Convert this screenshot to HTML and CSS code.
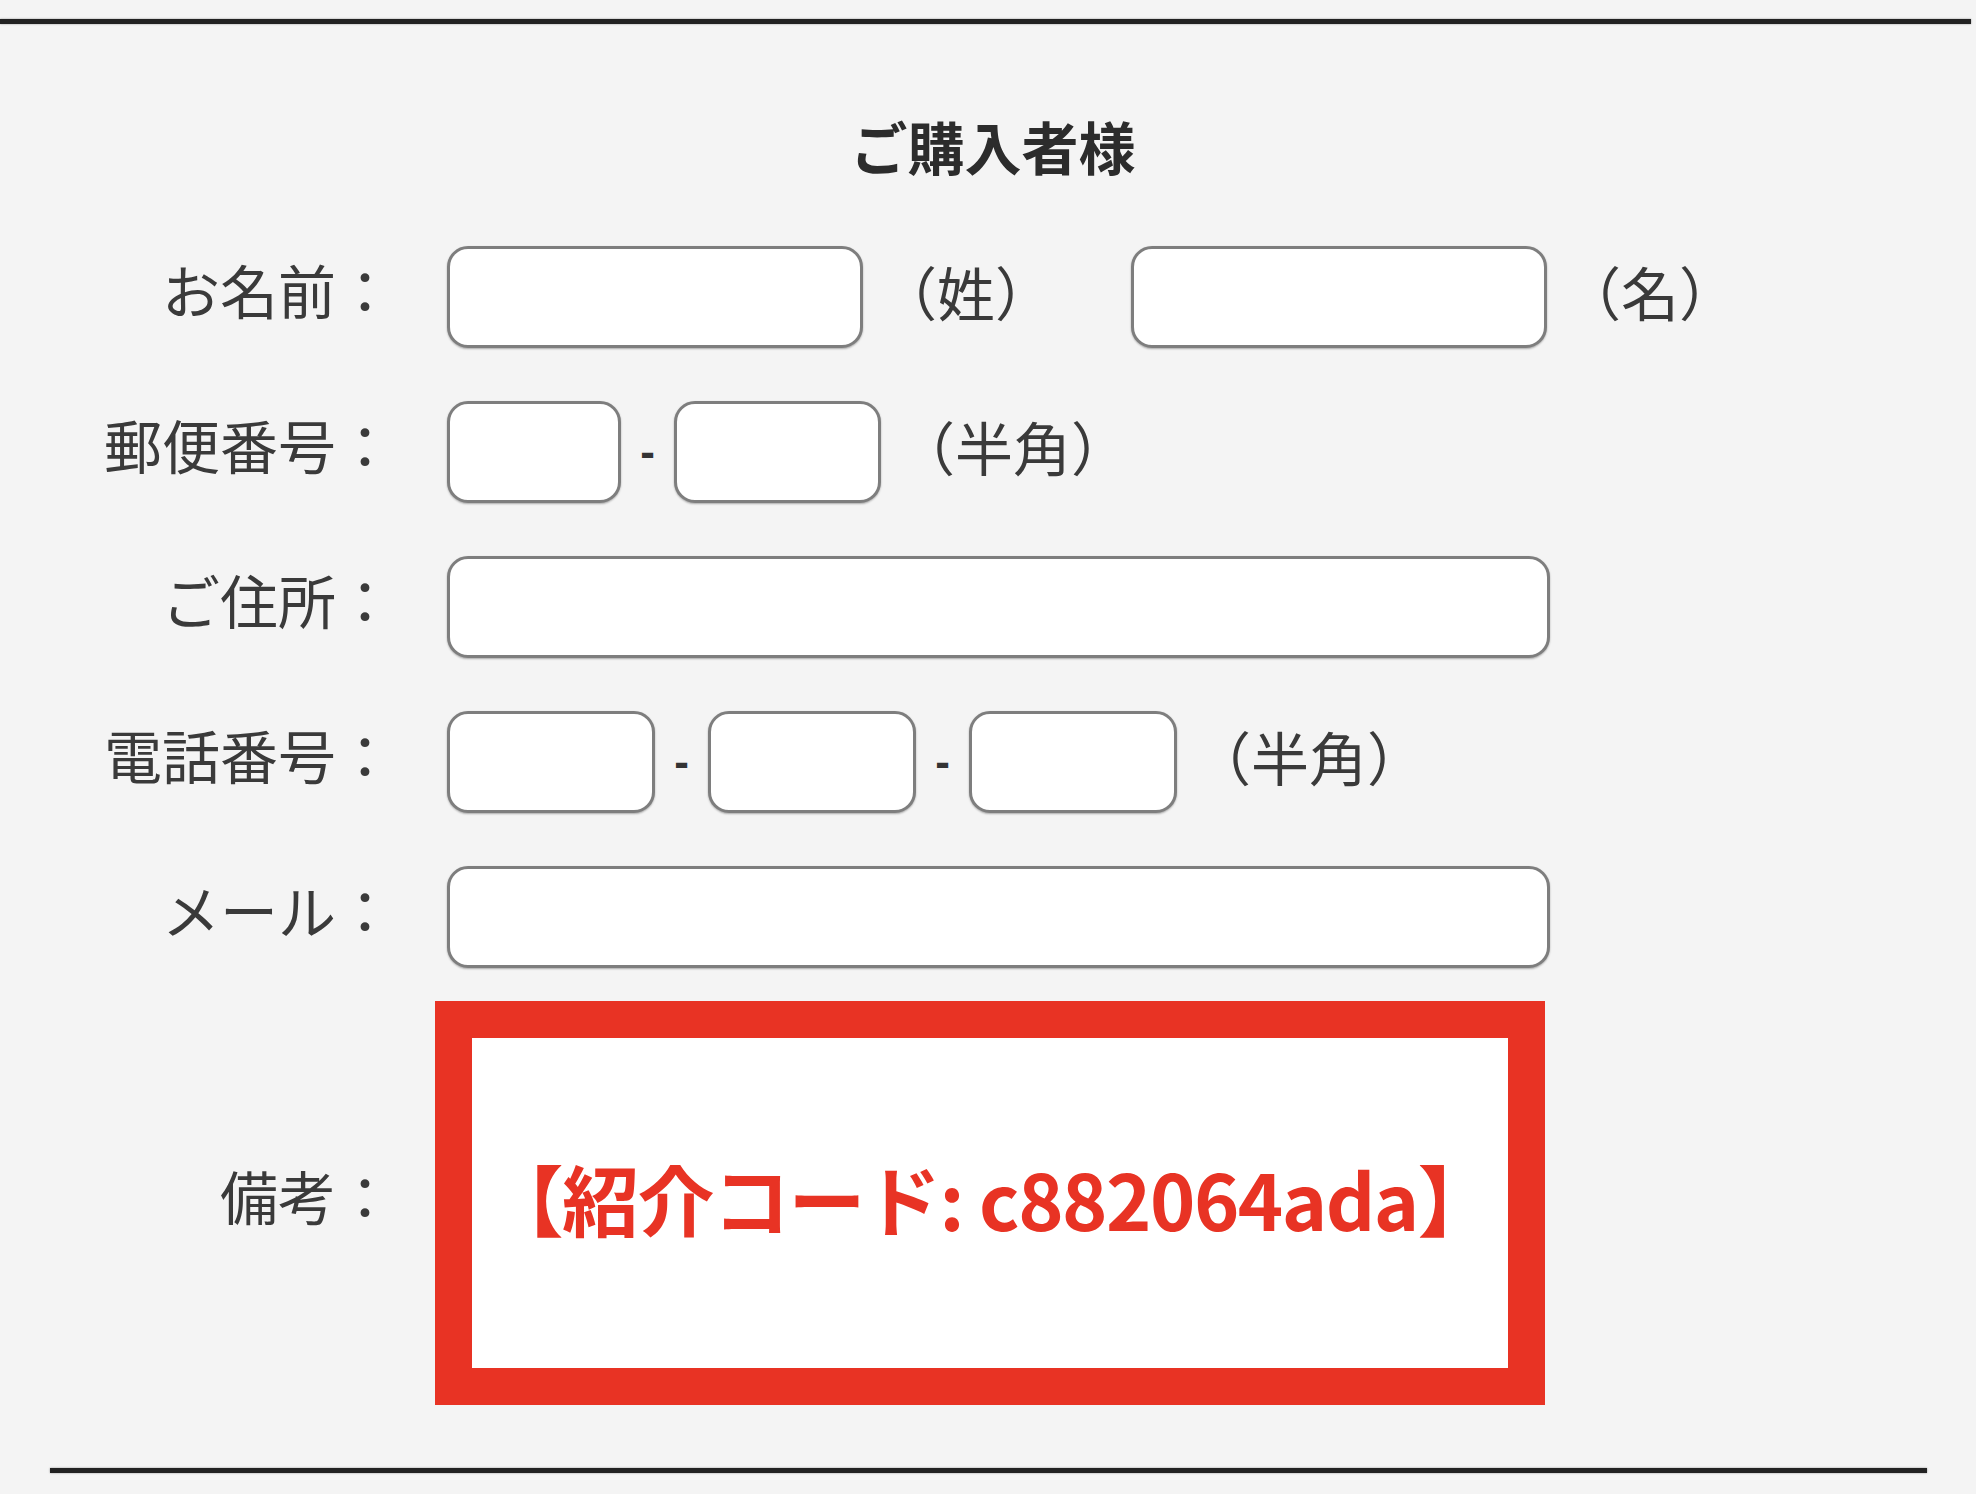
FILE: index.html
```html
<!DOCTYPE html>
<html lang="ja">
<head>
    <meta charset="UTF-8">
    <meta name="viewport" content="width=device-width, initial-scale=1.0">
    <title>ご購入者様</title>
    <link rel="stylesheet" href="styles.css">
</head>
<body>
    <div class="page">
        <div class="rule rule-top"></div>

        <!-- Buyer form -->
        <section class="buyer">
            <h2 class="buyer-title">ご購入者様</h2>

            <div class="form-row">
                <label class="form-label">お名前：</label>
                <div class="form-fields">
                    <input class="field field-name" type="text">
                    <span class="note">（姓）</span>
                    <input class="field field-name field-name-last" type="text">
                    <span class="note">（名）</span>
                </div>
            </div>

            <div class="form-row">
                <label class="form-label">郵便番号：</label>
                <div class="form-fields">
                    <input class="field field-zip1" type="text">
                    <span class="dash">-</span>
                    <input class="field field-zip2" type="text">
                    <span class="note">（半角）</span>
                </div>
            </div>

            <div class="form-row">
                <label class="form-label">ご住所：</label>
                <div class="form-fields">
                    <input class="field field-wide" type="text">
                </div>
            </div>

            <div class="form-row">
                <label class="form-label">電話番号：</label>
                <div class="form-fields">
                    <input class="field field-tel" type="text">
                    <span class="dash">-</span>
                    <input class="field field-tel" type="text">
                    <span class="dash">-</span>
                    <input class="field field-tel" type="text">
                    <span class="note">（半角）</span>
                </div>
            </div>

            <div class="form-row">
                <label class="form-label">メール：</label>
                <div class="form-fields">
                    <input class="field field-wide" type="text">
                </div>
            </div>

            <div class="form-row form-row-memo">
                <label class="form-label">備考：</label>
                <div class="form-fields">
                    <div class="memo-box">
                        <p class="memo-text">【紹介コード: c882064ada】</p>
                    </div>
                </div>
            </div>
        </section>

        <div class="rule rule-bottom"></div>
    </div>
</body>
</html>
```

FILE: styles.css
```css
body {
    font-family: "Noto Sans CJK JP", sans-serif;
    margin: 0;
    padding: 0;
    background-color: #f4f4f4;
    color: #3a3a3a;
}

.page {
    padding-top: 19px;
    padding-bottom: 20px;
}

/* Horizontal rules */
.rule {
    height: 5px;
    background-color: #222;
    box-shadow: 0 0 2px rgba(0, 0, 0, 0.45);
}

.rule-top {
    width: 1971px;
}

.rule-bottom {
    width: 1877px;
    margin-left: 50px;
    margin-top: 63px;
}

.buyer-title {
    margin: 92px 0 0;
    padding-bottom: 3px;
    font-size: 57px;
    line-height: 58px;
    font-weight: 700;
    text-align: center;
    color: #2c2c2c;
    padding-left: 10px;
}

.form-row {
    display: flex;
    align-items: center;
    margin-top: 53px;
}

.buyer-title + .form-row {
    margin-top: 69px;
}

.form-label {
    width: 394px;
    flex-shrink: 0;
    text-align: right;
    font-size: 58px;
    line-height: 58px;
    padding-bottom: 16px;
}

.form-fields {
    display: flex;
    align-items: center;
    margin-left: 53px;
}

.field {
    box-sizing: border-box;
    height: 102px;
    margin: 0;
    background-color: #ffffff;
    border: 3px solid #7e7e7e;
    border-radius: 21px;
    box-shadow: 0 1px 2px rgba(0, 0, 0, 0.3);
    outline: none;
}

.field-name {
    width: 416px;
}

.field-name-last {
    margin-left: 78px;
}

.field-zip1 {
    width: 174px;
}

.field-zip2 {
    width: 207px;
}

.field-tel {
    width: 208px;
}

.field-wide {
    width: 1103px;
}

.dash {
    width: 53px;
    text-align: center;
    font-family: "Liberation Sans", sans-serif;
    font-size: 44px;
    font-weight: 700;
    color: #333;
}

.note {
    margin-left: 16px;
    font-size: 58px;
    line-height: 58px;
    padding-bottom: 12px;
}

/* Memo / referral code */
.form-row-memo {
    margin-top: 33px;
}

.form-row-memo .form-fields {
    margin-left: 41px;
}

.memo-box {
    box-sizing: border-box;
    width: 1110px;
    height: 404px;
    border: 37px solid #e83324;
    background-color: #ffffff;
    display: flex;
    align-items: center;
    justify-content: center;
}

.memo-text {
    margin: 0;
    padding-bottom: 12px;
    font-size: 77px;
    line-height: 1;
    font-weight: 700;
    letter-spacing: -1.5px;
    color: #e83324;
    white-space: nowrap;
}
```
